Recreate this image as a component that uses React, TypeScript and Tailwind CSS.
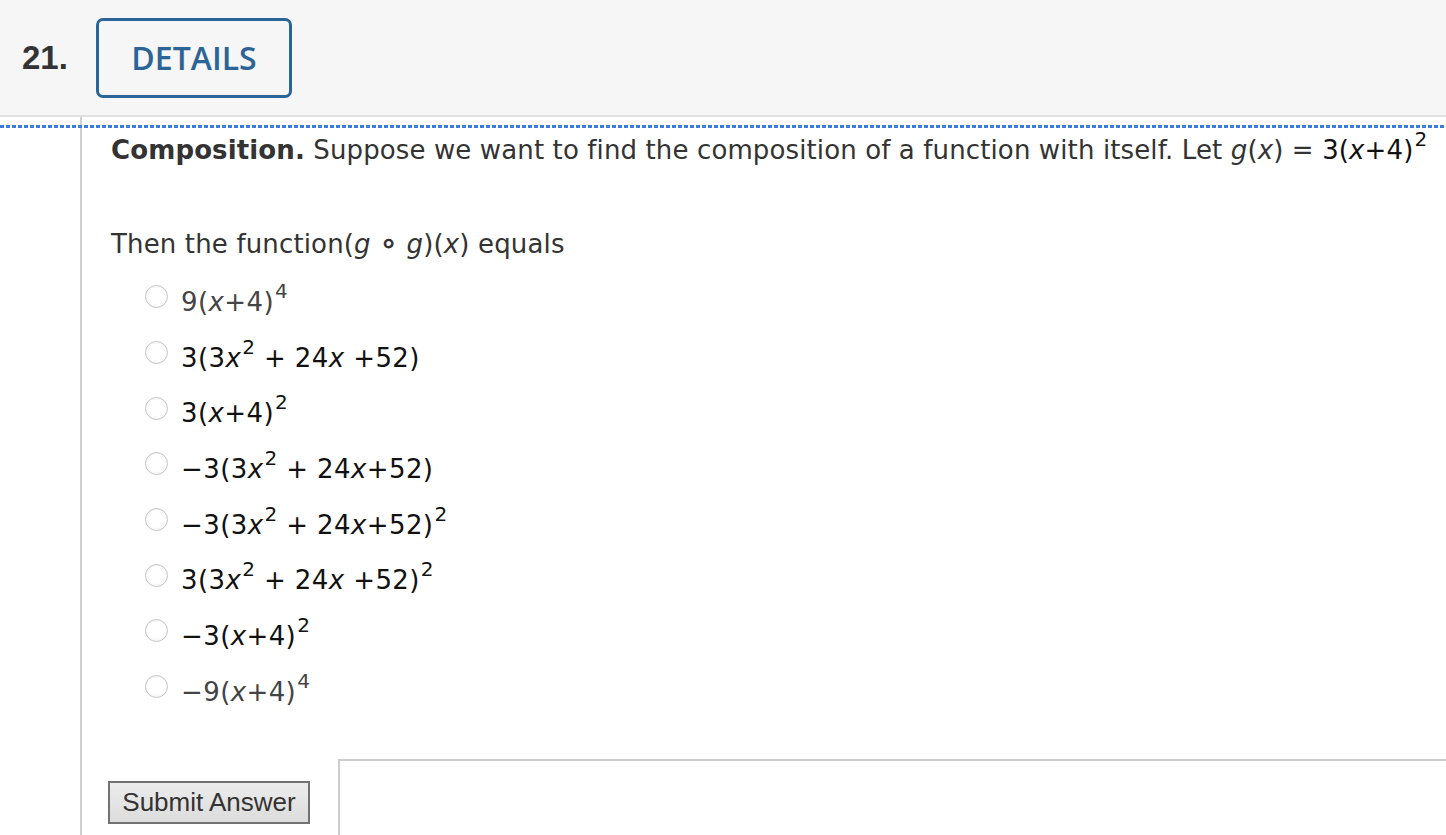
const Sup = ({ children }: { children: React.ReactNode }) => (
  <span className="ml-[1px] text-[20px] align-[13px] leading-[0]">{children}</span>
);

const X = () => <i>x</i>;

const options: { dark: boolean; body: React.ReactNode }[] = [
  { dark: false, body: <>9(<X />+4)<Sup>4</Sup></> },
  { dark: true, body: <>3(3<X /><Sup>2</Sup> + 24<X /> +52)</> },
  { dark: true, body: <>3(<X />+4)<Sup>2</Sup></> },
  { dark: true, body: <>−3(3<X /><Sup>2</Sup> + 24<X />+52)</> },
  { dark: true, body: <>−3(3<X /><Sup>2</Sup> + 24<X />+52)<Sup>2</Sup></> },
  { dark: true, body: <>3(3<X /><Sup>2</Sup> + 24<X /> +52)<Sup>2</Sup></> },
  { dark: true, body: <>−3(<X />+4)<Sup>2</Sup></> },
  { dark: false, body: <>−9(<X />+4)<Sup>4</Sup></> },
];

const App = () => {
  return (
    <div className="w-[1446px] h-[835px] overflow-hidden bg-white font-['DejaVu_Sans',Verdana,sans-serif] text-[#333]">
      {/* header */}
      <div className="h-[117px] bg-[#f6f6f6] border-b-2 border-[#e0e0e0] flex items-center">
        <span className="ml-[22px] w-[74px] font-['Liberation_Sans',Arial,sans-serif] font-bold text-[33px] text-[#333]">21.</span>
        <div className="w-[196px] h-[80px] border-[3px] border-[#2b6497] rounded-[7px] flex items-center justify-center">
          <span className="font-['Open_Sans',sans-serif] font-semibold text-[32px] text-[#2b6497]">DETAILS</span>
        </div>
      </div>

      {/* body */}
      <div className="relative flex h-[718px]">
        <div className="absolute top-[8px] left-0 right-0 h-[3px] bg-[repeating-linear-gradient(to_right,#3b7ddd_0_4px,transparent_4px_6px)]" />
        <div className="w-[82px] shrink-0 border-r-2 border-[#cfcfcf]" />
        <div className="flex-1 pl-[26px] pt-[15px] flex flex-col">
          <p className="pl-[3px] text-[26px] leading-[36px] tracking-[0.12px] whitespace-nowrap">
            <b>Composition.</b> Suppose we want to find the composition of a function with itself. Let <i>g</i>(<i>x</i>) = <span className="text-[#111]">3(<X />+4)<Sup>2</Sup></span>
          </p>
          <p className="pl-[3px] mt-[58px] text-[26px] leading-[36px] tracking-[0.15px]">
            Then the function(<i>g</i> <b className="text-[30px] leading-[0]">∘</b> <i>g</i>)(<i>x</i>) equals
          </p>
          <div className="mt-[12px] flex flex-col">
            {options.map((o, i) => (
              <div key={i} className="h-[55.7px] flex items-center">
                <span className="ml-[37px] mb-[10px] w-[23px] h-[23px] rounded-full border border-[#c4c4c4] bg-[radial-gradient(circle_at_50%_40%,#ffffff_55%,#ececec)] shadow-[inset_0_1px_1px_rgba(0,0,0,0.06)]" />
                <span className={`ml-[13px] text-[26px] leading-[36px] tracking-[0.4px] whitespace-nowrap ${o.dark ? "text-[#111]" : "text-[#444]"}`}>
                  {o.body}
                </span>
              </div>
            ))}
          </div>
          <div className="mt-[39px] flex flex-1">
            <button className="mt-[22px] w-[202px] h-[43px] border-2 border-[#727272] bg-[linear-gradient(#ececec,#dcdcdc)] font-['Liberation_Sans',Arial,sans-serif] text-[26px] text-[#333] leading-none">
              Submit Answer
            </button>
            <div className="ml-[28px] flex-1 border-t-2 border-l-2 border-[#cccccc]" />
          </div>
        </div>
      </div>
    </div>
  );
};

export default App;
